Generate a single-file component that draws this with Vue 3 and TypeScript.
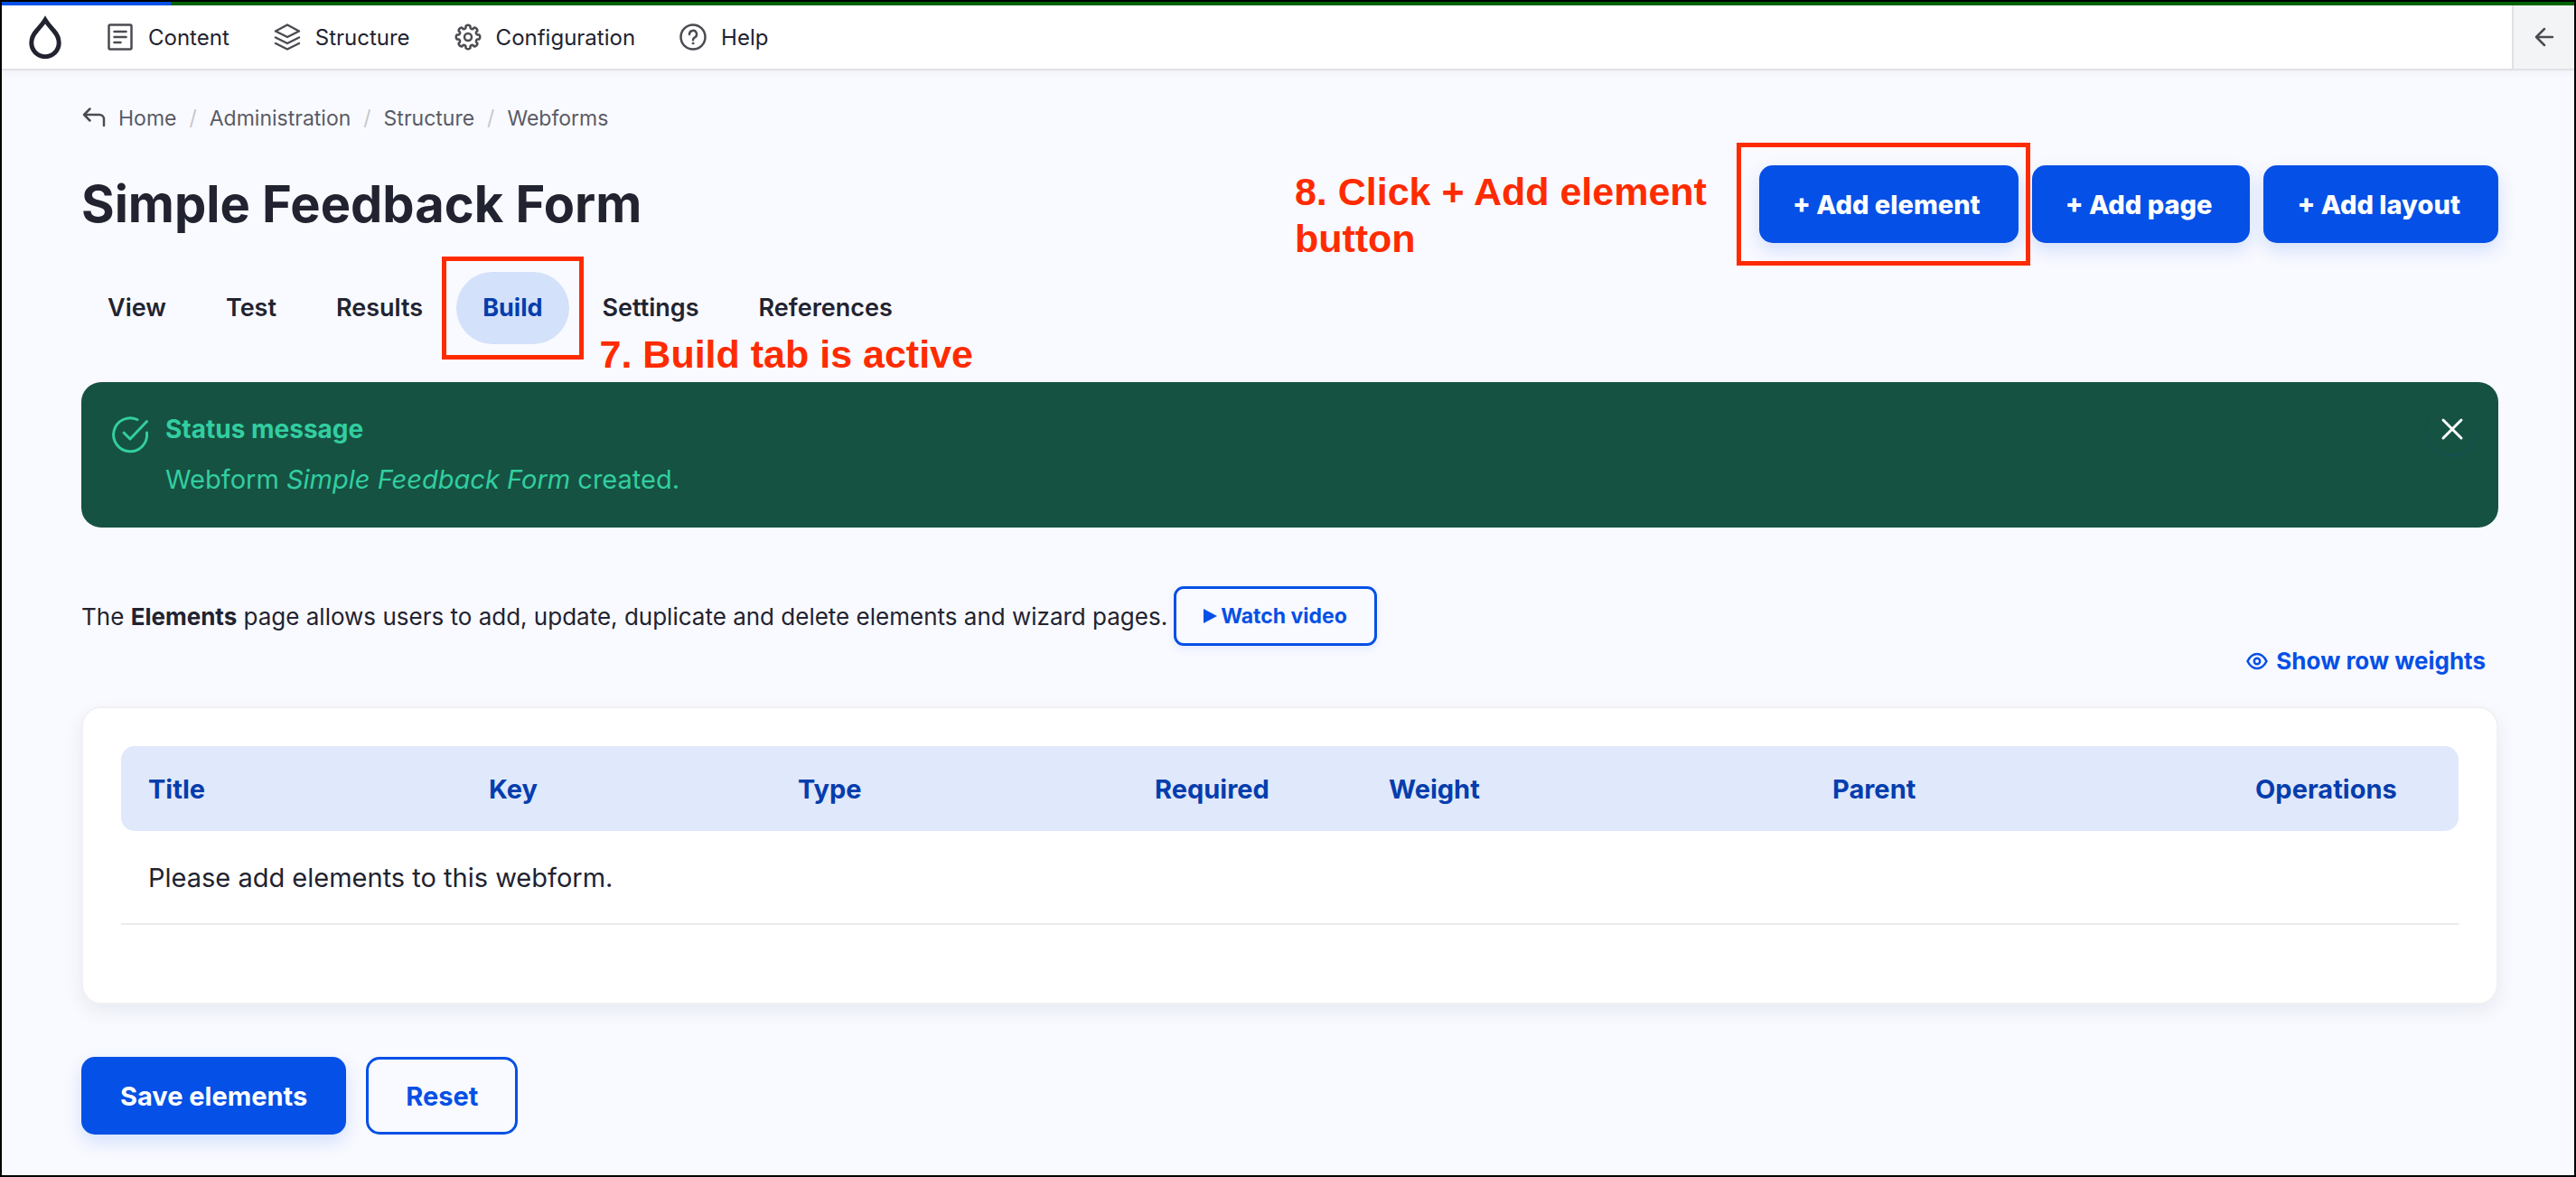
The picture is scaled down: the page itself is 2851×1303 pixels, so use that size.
<script setup lang="ts">
interface Crumb { label: string }
interface Tab { label: string; active?: boolean }
interface Column { label: string; width: number }

const menu: string[] = ['Content', 'Structure', 'Configuration', 'Help']
const crumbs: Crumb[] = [
  { label: 'Home' },
  { label: 'Administration' },
  { label: 'Structure' },
  { label: 'Webforms' },
]
const tabs: Tab[] = [
  { label: 'View' },
  { label: 'Test' },
  { label: 'Results' },
  { label: 'Build', active: true },
  { label: 'Settings' },
  { label: 'References' },
]
// Relative widths: the fixed table layout shares out the full width in this proportion.
const columns: Column[] = [
  { label: 'Title', width: 377 },
  { label: 'Key', width: 342 },
  { label: 'Type', width: 395 },
  { label: 'Required', width: 259 },
  { label: 'Weight', width: 491 },
  { label: 'Parent', width: 468 },
  { label: 'Operations', width: 255 },
]

// Outline of an eight-toothed gear centred in a 32 by 32 box.
function gearPath(): string {
  const point = (radius: number, degrees: number): string => {
    const angle = (degrees * Math.PI) / 180
    return `${(16 + radius * Math.cos(angle)).toFixed(2)} ${(16 + radius * Math.sin(angle)).toFixed(2)}`
  }
  const parts: string[] = []
  for (let tooth = 0; tooth < 8; tooth++) {
    const mid = tooth * 45
    parts.push(
      `${tooth === 0 ? 'M' : 'L'}${point(10.5, mid - 14)}`,
      `L${point(12.6, mid - 11)}`,
      `Q${point(14.2, mid)} ${point(12.6, mid + 11)}`,
      `L${point(10.5, mid + 14)}`,
      `Q${point(9.2, mid + 22.5)} ${point(10.5, mid + 31)}`,
    )
  }
  return parts.join('') + 'Z'
}
const gear = gearPath()
</script>

<template>
  <div class="page">
    <div class="progress"><span class="progress-done"></span></div>

    <header class="toolbar">
      <a class="logo" href="#" aria-label="Home">
        <svg width="36" height="48" viewBox="0 0 36 48" fill="none" stroke="currentColor" stroke-width="5">
          <path d="M18 5C15 10 12 13 8.500 17 5 21 2.800 25 2.800 30.500a15.200 15.200 0 0 0 30.400 0C33.200 25 31 21 27.500 17 24 13 21 10 18 5Z" />
        </svg>
      </a>
      <nav class="menu" aria-label="Administration menu">
        <a v-for="item in menu" :key="item" href="#">
          <svg width="32" height="32" viewBox="0 0 32 32" fill="none" stroke="currentColor" stroke-width="2.500" stroke-linecap="round" stroke-linejoin="round">
            <template v-if="item === 'Content'">
              <rect x="3.500" y="2.500" width="25" height="27" rx="1.500" />
              <path d="M9.500 10h13M9.500 16h13M9.500 22h7" />
            </template>
            <template v-else-if="item === 'Structure'">
              <path d="M16 2.500 29 9.500 16 16 3 9.500Z" />
              <path d="M3 16.500l13 6.500 13-6.500M3 23l13 6.500L29 23" />
            </template>
            <template v-else-if="item === 'Configuration'">
              <circle cx="16" cy="16" r="4" />
              <path :d="gear" />
            </template>
            <template v-else>
              <circle cx="16" cy="16" r="13.500" />
              <path d="M12 13a4 4 0 1 1 6 3.300c-1.500.9-2 1.600-2 2.900" />
              <circle cx="16" cy="23" r="1" fill="currentColor" stroke-width="1" />
            </template>
          </svg>
          {{ item }}
        </a>
      </nav>
      <button class="collapse" type="button" aria-label="Collapse toolbar">
        <svg width="24" height="24" viewBox="0 0 24 24" fill="none" stroke="currentColor" stroke-width="2.500" stroke-linecap="round" stroke-linejoin="round">
          <path d="M21 12H3M12 3l-9 9 9 9" />
        </svg>
      </button>
    </header>

    <main class="content">
      <nav class="breadcrumb" aria-label="Breadcrumb">
        <svg width="26" height="26" viewBox="0 0 26 26" fill="none" stroke="currentColor" stroke-width="2.500" stroke-linecap="round" stroke-linejoin="round">
          <path d="M8.500 2.500 2 9l6.500 6.500M2 9h17a5 5 0 0 1 5 5v7" />
        </svg>
        <ol>
          <li v-for="crumb in crumbs" :key="crumb.label"><a href="#">{{ crumb.label }}</a></li>
        </ol>
      </nav>

      <div class="title-row">
        <h1>Simple Feedback Form</h1>
        <div class="actions">
          <div class="anchor">
            <button class="btn primary" type="button">+ Add element</button>
            <span class="mark mark-add"></span>
            <strong class="note note-add">8. Click + Add element button</strong>
          </div>
          <button class="btn primary" type="button">+ Add page</button>
          <button class="btn primary" type="button">+ Add layout</button>
        </div>
      </div>

      <ul class="tabs">
        <li v-for="tab in tabs" :key="tab.label" class="anchor">
          <a href="#" :class="{ active: tab.active }">{{ tab.label }}</a>
          <template v-if="tab.active">
            <span class="mark mark-tab"></span>
            <strong class="note note-tab">7. Build tab is active</strong>
          </template>
        </li>
      </ul>

      <section class="status" role="status">
        <svg class="status-icon" width="44" height="44" viewBox="0 0 44 44" fill="none" stroke="currentColor" stroke-width="3" stroke-linecap="round" stroke-linejoin="round">
          <path d="M30 5.500A18.500 18.500 0 1 0 40.500 20" />
          <path d="M15 20l7 7L40.500 7.500" />
        </svg>
        <div class="status-text">
          <h2>Status message</h2>
          <p>Webform <em>Simple Feedback Form</em> created.</p>
        </div>
        <button class="close" type="button" aria-label="Close message">
          <svg width="26" height="26" viewBox="0 0 26 26" fill="none" stroke="currentColor" stroke-width="3" stroke-linecap="round">
            <path d="M3 3l20 20M23 3 3 23" />
          </svg>
        </button>
      </section>

      <div class="help">
        <p>The <b>Elements</b> page allows users to add, update, duplicate and delete elements and wizard pages.</p>
        <button class="btn outline small" type="button">
          <svg width="15" height="18" viewBox="0 0 15 18" fill="currentColor"><path d="M0 1v16l15-8Z" /></svg>
          Watch video
        </button>
      </div>

      <div class="weights">
        <button class="link" type="button">
          <svg width="24" height="20" viewBox="0 0 24 20" fill="none" stroke="currentColor" stroke-width="2.500">
            <path d="M1.500 10C4 5 7.500 2 12 2s8 3 10.500 8c-2.500 5-6 8-10.500 8s-8-3-10.500-8Z" />
            <circle cx="12" cy="10" r="3.200" />
          </svg>
          Show row weights
        </button>
      </div>

      <section class="card">
        <table>
          <colgroup>
            <col v-for="column in columns" :key="column.label" :style="{ width: column.width + 'px' }" />
          </colgroup>
          <thead>
            <tr>
              <th v-for="column in columns" :key="column.label" scope="col">{{ column.label }}</th>
            </tr>
          </thead>
          <tbody>
            <tr>
              <td :colspan="columns.length">Please add elements to this webform.</td>
            </tr>
          </tbody>
        </table>
      </section>

      <div class="form-actions">
        <button class="btn primary" type="button">Save elements</button>
        <button class="btn outline" type="button">Reset</button>
      </div>
    </main>
  </div>
</template>

<style>
body {
  margin: 0;
}
</style>

<style scoped>
.page {
  box-sizing: border-box;
  min-height: 100vh;
  border: 2px solid #000;
  background: #f9faff;
  color: #222330;
  font-family: Inter, "Liberation Sans", sans-serif;
  font-size: 29px;
}
a {
  color: inherit;
  text-decoration: none;
}
button {
  font-family: inherit;
  cursor: pointer;
}
svg {
  flex: none;
}
h1,
h2,
p {
  margin: 0;
}
ul,
ol {
  margin: 0;
  padding: 0;
  list-style: none;
}

.progress {
  display: flex;
  height: 4px;
  background: #006400;
}
.progress-done {
  width: 187px;
  background: #0550e6;
}

.toolbar {
  display: flex;
  align-items: stretch;
  height: 70px;
  border-bottom: 2px solid #e1e1e5;
  background: #fff;
  box-shadow: 0 2px 8px rgba(0, 0, 0, 0.05);
}
.logo {
  display: flex;
  align-items: center;
  margin: 0 49px 0 30px;
}
.menu {
  display: flex;
  flex: 1;
  align-items: center;
  gap: 48px;
  font-size: 24px;
}
.menu a {
  display: flex;
  align-items: center;
  gap: 15px;
}
.menu svg {
  color: #4b4c52;
}
.collapse {
  display: flex;
  align-items: center;
  justify-content: center;
  width: 69px;
  padding: 0;
  border: 0;
  border-left: 2px solid #e1e1e5;
  background: #f3f4f5;
  color: #4b4c52;
}

.content {
  padding: 37px 84px 44px 88px;
}
.breadcrumb {
  display: flex;
  align-items: center;
  gap: 14px;
  padding-left: 1px;
  color: #5a5b66;
  font-size: 23px;
  line-height: 32px;
}
.breadcrumb svg {
  color: #4b4c52;
}
.breadcrumb ol {
  display: flex;
}
.breadcrumb li + li::before {
  content: "/";
  margin: 0 14px;
  color: #c6c7cc;
}

.title-row {
  display: flex;
  align-items: center;
  justify-content: space-between;
  margin-top: 36px;
}
h1 {
  font-size: 56px;
  font-weight: 700;
  line-height: 80px;
}
.actions {
  display: flex;
  gap: 15px;
}
.anchor {
  position: relative;
}

.btn {
  box-sizing: border-box;
  height: 86px;
  padding: 0 43px;
  border: 0;
  border-radius: 15px;
  font-size: 29px;
  font-weight: 700;
}
.primary {
  background: #0550e6;
  color: #fff;
  box-shadow: 0 8px 20px rgba(5, 80, 230, 0.16);
}
.actions .primary {
  padding: 0 42px 0 37px;
  font-weight: 800;
}
.outline {
  padding: 0 41px;
  border: 3px solid #0550e6;
  background: transparent;
  color: #0550e6;
}
.small {
  display: flex;
  align-items: center;
  gap: 4px;
  height: 66px;
  padding: 0 30px;
  border-radius: 11px;
  box-shadow: 0 4px 8px rgba(5, 80, 230, 0.08);
  font-size: 23px;
}

.tabs {
  display: flex;
  gap: 8px;
  margin-top: 32px;
  font-size: 27px;
  font-weight: 600;
}
.tabs a {
  display: block;
  padding: 0 29px;
  border-radius: 40px;
  line-height: 80px;
}
.tabs .active {
  background: #d4e1fa;
  color: #053dad;
  font-weight: 700;
}

.mark {
  position: absolute;
  z-index: 1;
  border: 5px solid #ff2b00;
  pointer-events: none;
}
.mark-tab {
  inset: -17px -16px;
}
.mark-add {
  inset: -25px -13px -25px -25px;
}
.note {
  position: absolute;
  z-index: 1;
  color: #ff2b00;
  font-family: "Liberation Sans", Arial, sans-serif;
  font-size: 43px;
  font-weight: 700;
  line-height: 52px;
}
.note-tab {
  top: 65px;
  left: calc(100% + 34px);
  white-space: nowrap;
}
.note-add {
  top: 3px;
  right: calc(100% + 34px);
  width: 480px;
}

.status {
  display: flex;
  align-items: flex-start;
  gap: 17px;
  margin-top: 42px;
  padding: 24px 23px 26px 32px;
  border-radius: 22px;
  background: #155242;
  color: #32cea0;
}
.status-icon {
  margin-top: 12px;
}
.status-text {
  flex: 1;
}
.status h2 {
  font-size: 28px;
  font-weight: 700;
  line-height: 56px;
}
.status p {
  line-height: 55px;
}
.close {
  display: flex;
  align-items: center;
  justify-content: center;
  width: 56px;
  height: 56px;
  padding: 0;
  border: 0;
  border-radius: 50%;
  background: transparent;
  box-shadow: 0 2px 3px rgba(20, 80, 110, 0.5);
  color: #fff;
}

.help {
  display: flex;
  align-items: center;
  gap: 7px;
  margin-top: 65px;
  font-size: 26px;
}
.weights {
  display: flex;
  justify-content: flex-end;
  padding-right: 14px;
}
.link {
  display: flex;
  align-items: center;
  gap: 9px;
  padding: 0;
  border: 0;
  background: none;
  color: #0550e6;
  font-size: 26px;
  font-weight: 700;
  line-height: 34px;
}

.card {
  margin-top: 33px;
  padding: 42px 42px 86px;
  border: 2px solid #f1f1f4;
  border-radius: 22px;
  background: #fff;
  box-shadow: 0 8px 20px rgba(30, 50, 90, 0.08);
}
table {
  width: 100%;
  border-spacing: 0;
  table-layout: fixed;
}
th,
td {
  padding: 0 30px;
  text-align: left;
}
th {
  height: 94px;
  background: #e0e8fb;
  color: #053dad;
  font-weight: 700;
}
th:first-child {
  border-radius: 15px 0 0 15px;
}
th:last-child {
  border-radius: 0 15px 15px 0;
}
td {
  height: 102px;
  border-bottom: 2px solid #ebebed;
}

.form-actions {
  display: flex;
  gap: 22px;
  margin-top: 58px;
}
</style>
